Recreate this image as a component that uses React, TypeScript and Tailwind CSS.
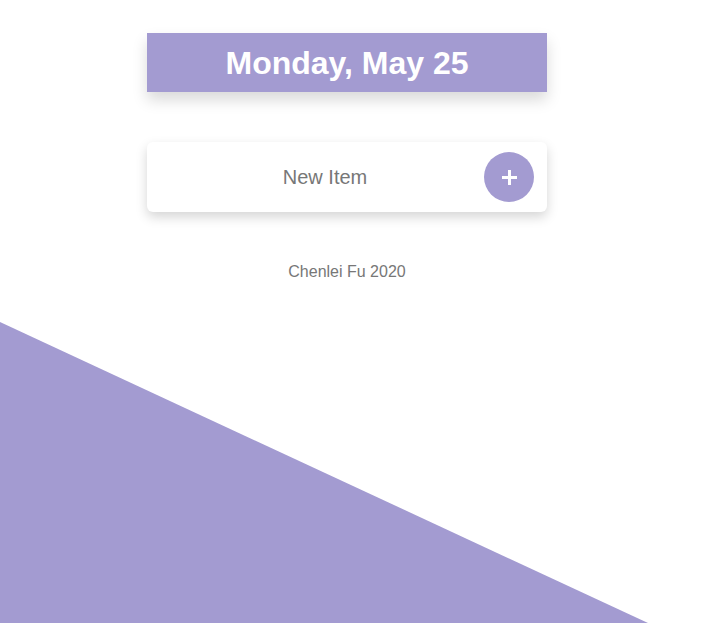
import { useState } from "react";

export default function App() {
  const [item, setItem] = useState("");

  return (
    <div className="relative min-h-screen overflow-hidden bg-white" style={{ fontFamily: '"Liberation Sans", Arial, sans-serif' }}>
      <svg
        className="absolute inset-0 h-full w-full"
        viewBox="0 0 728 623"
        preserveAspectRatio="none"
      >
        <polygon points="0,322 648,623 0,623" fill="#a39bd1" />
      </svg>

      <main className="relative ml-[147px] flex w-[400px] flex-col pt-[33px]">
        <header className="flex h-[59px] items-center justify-center bg-[#a39bd1] shadow-[0_8px_14px_rgba(0,0,0,0.15)]">
          <h1 className="text-[32px] font-bold text-white">Monday, May 25</h1>
        </header>

        <form
          onSubmit={(e) => e.preventDefault()}
          className="mt-[50px] flex h-[70px] items-center rounded-[6px] bg-white pr-[13px] shadow-[0_5px_12px_rgba(0,0,0,0.17)]"
        >
          <input
            value={item}
            onChange={(e) => setItem(e.target.value)}
            placeholder="New Item"
            className="h-full min-w-0 flex-1 bg-transparent pl-[19px] text-center text-[20px] text-[#777] placeholder:text-[#777] focus:outline-none"
          />
          <button
            type="submit"
            className="flex h-[50px] w-[50px] items-center justify-center rounded-full bg-[#a39bd1]"
          >
            <svg width="15" height="15" viewBox="0 0 15 15">
              <rect x="6" y="0" width="3" height="15" fill="white" />
              <rect x="0" y="6" width="15" height="3" fill="white" />
            </svg>
          </button>
        </form>

        <footer className="mt-[48px] text-center text-[16px] text-[#777]">Chenlei Fu 2020</footer>
      </main>
    </div>
  );
}
